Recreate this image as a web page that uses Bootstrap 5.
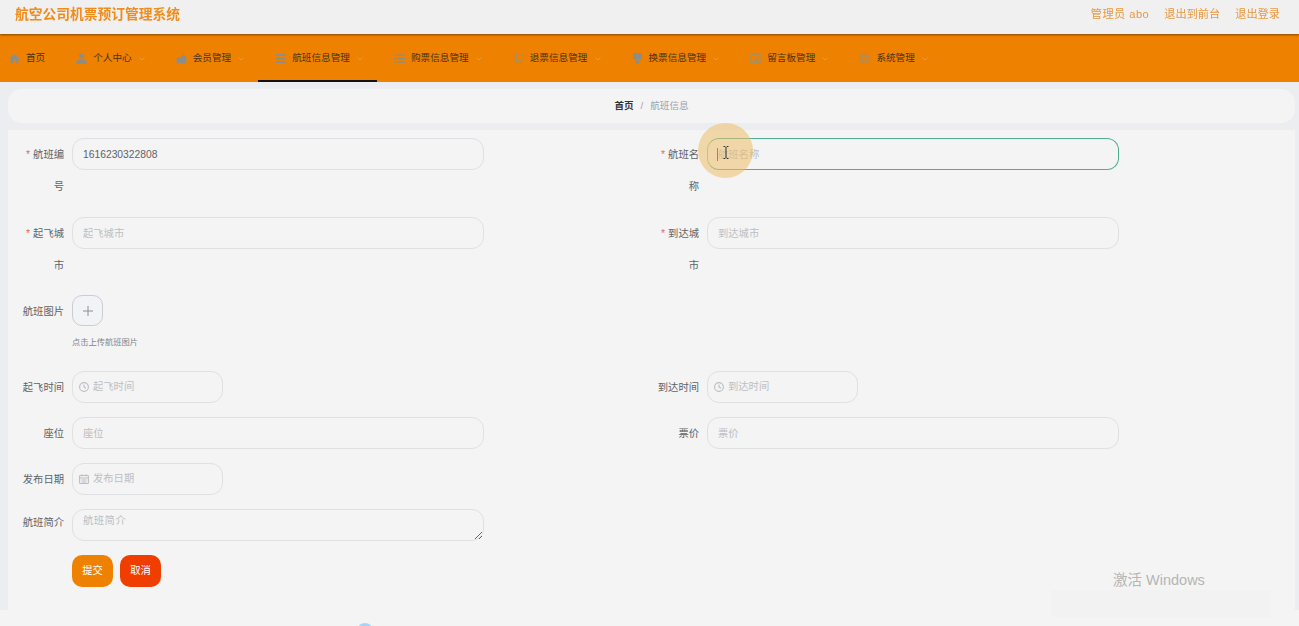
<!DOCTYPE html>
<html lang="zh-CN">
<head>
<meta charset="utf-8">
<title>航空公司机票预订管理系统</title>
<link href="https://cdn.jsdelivr.net/npm/bootstrap@5.3.0/dist/css/bootstrap.min.css" rel="stylesheet">
<style>
html,body{height:626px;overflow:hidden;}
body{background:#f4f4f4;font-family:"Liberation Sans","Noto Sans CJK SC",sans-serif;font-size:10.3px;color:#5f6267;}
.stage{position:relative;height:626px;overflow:hidden;filter:blur(.35px);}
.topbar{height:34px;background:#f0f0f0;padding:0 19px 0 15px;position:relative;z-index:2;box-shadow:0 1px 2px rgba(70,40,0,.65);}
.brand-title{font-size:13.75px;font-weight:700;color:#ef8c1c;line-height:30px;}
.top-link{font-size:11.2px;color:#e9983f;text-decoration:none;line-height:28px;margin-left:15px;}
.top-link.admin{letter-spacing:.45px;}
.menubar{height:48px;background:#ef8100;}
.menu-item{height:48px;padding:3px 14px 0 17px;font-size:9.65px;color:#4a3312;text-decoration:none;border-bottom:2px solid transparent;}
.menu-item:hover{color:#4a3312;}
.menu-item.first{padding:2px 14px 0 9px;}
.menu-item.on{border-bottom-color:#111;}
.mi{width:11px;height:11px;margin-right:6px;flex:none;fill:#8d8d88;}
.ms{fill:none;stroke:#a98d5e;stroke-width:1.5;}
.chev{width:6px;height:4px;margin-left:7px;flex:none;fill:none;stroke:#dd9f49;stroke-width:1;}
.content-area{height:528px;background:#ecedf0;padding:7px 4px 0 8px;}
.crumbs{height:34px;border-radius:14px;background:#f4f4f4;font-size:9.6px;margin-bottom:7px;padding-left:0;}
.crumbs b{color:#333;font-weight:700;}
.crumbs i{font-style:normal;color:#9aa0a8;margin:0 7px;}
.crumbs span{color:#9aa3ad;}
.form-panel{height:480px;background:#f4f4f4;padding:8px 17px 0 0;}
.frow{margin-bottom:14px;}
.frow.m15{margin-bottom:15px;}
.fitem{display:flex;align-items:flex-start;}
.flabel{width:56px;margin:0 8px -1px 0;padding:1px 0 0 9px;text-align:right;line-height:32px;font-size:10.3px;color:#5f6267;word-break:break-all;}
.flabel.plain{padding-left:0;white-space:nowrap;}
.flabel.short{line-height:26px;}
.req{color:#e26a60;margin-right:3px;}
.form-control.fld{width:412px;height:32px;padding:0 10px;border:1px solid #dfe0e3;border-radius:12px;background:#f4f4f4;font-size:10.3px;color:#5f6267;box-shadow:none;}
.form-control.fld::placeholder{color:#bcbec3;}
.form-control.fld.focused{border-color:#4fae92;border-left-color:#8fcf8a;}
.form-control.area{resize:vertical;padding:3px 10px;line-height:16px;letter-spacing:.5px;min-height:32px;}
.pickbox{width:151px;height:32px;border:1px solid #dfe0e3;border-radius:12px;padding-left:6px;}
.pickbox svg{width:10px;height:10px;margin-right:4px;flex:none;fill:none;stroke:#bcbec3;stroke-width:1.1;}
.pickbox input{border:0;outline:0;background:transparent;width:120px;font-size:10.3px;padding:0;}
.pickbox input::placeholder{color:#bcbec3;}
.uploader{width:31px;height:31px;border:1px solid #c8cdd6;border-radius:10px;background:#f1f3f6;}
.uploader svg{width:10px;height:10px;stroke:#8a8f96;stroke-width:1;fill:none;}
.hint{font-size:8.25px;color:#80848a;line-height:31px;padding-top:1px;height:31px;}
.btn.act{width:41px;height:32px;padding:0;border:0;border-radius:10px;font-size:10.3px;color:#fff;}
.btn-sub{background:#ef8100;}
.btn-can{background:#f03d00;margin-left:7px;}
.actions{margin-left:64px;}
.ripple{position:absolute;left:698px;top:123px;width:55px;height:55px;border-radius:50%;background:rgba(238,190,105,.55);z-index:3;}
.beam{position:absolute;left:722px;top:146px;width:8px;height:13px;z-index:4;fill:none;stroke:#333;stroke-width:1;}
.caret-line{position:absolute;left:717px;top:148px;width:1px;height:13px;background:#8d8a80;z-index:4;}
.blue-dot{position:absolute;left:357px;top:623px;width:16px;height:16px;border-radius:50%;background:#a9d4f5;}
.wm{position:absolute;left:1113px;top:571px;font-size:14.5px;line-height:18px;color:#b5b5b5;z-index:3;}
.wm-smudge{position:absolute;left:1051px;top:590px;width:220px;height:27px;background:#f2f2f2;}
</style>
</head>
<body>
<div class="stage">
  <header class="topbar d-flex justify-content-between align-items-start">
    <div class="brand-title">航空公司机票预订管理系统</div>
    <div class="d-flex">
      <a class="top-link admin" href="#">管理员 abo</a>
      <a class="top-link" href="#">退出到前台</a>
      <a class="top-link" href="#">退出登录</a>
    </div>
  </header>
  <nav class="menubar d-flex">
    <a class="menu-item first d-flex align-items-center" href="#"><svg class="mi" viewBox="0 0 16 16"><path d="M8 1.500 0 9h2.500v6h4v-4.500h3V15h4V9H16z"/></svg>首页</a>
    <a class="menu-item d-flex align-items-center" href="#"><svg class="mi" viewBox="0 0 16 16"><circle cx="8" cy="4.500" r="3.800"/><path d="M0 15.500c0-4.500 3-6 8-6s8 1.500 8 6z"/></svg>个人中心<svg class="chev" viewBox="0 0 6 4"><path d="M.5.5 3 3 5.500.5"/></svg></a>
    <a class="menu-item d-flex align-items-center" href="#"><svg class="mi" viewBox="0 0 16 16"><path d="M1 7l5-1 5-4 4 3v10H1z"/></svg>会员管理<svg class="chev" viewBox="0 0 6 4"><path d="M.5.5 3 3 5.500.5"/></svg></a>
    <a class="menu-item on d-flex align-items-center" href="#"><svg class="mi" viewBox="0 0 16 16"><path d="M1 1.500h14v2.500H1zM1 6.800h14v2.500H1zM1 12h14v2.500H1z"/></svg>航班信息管理<svg class="chev" viewBox="0 0 6 4"><path d="M.5.5 3 3 5.500.5"/></svg></a>
    <a class="menu-item d-flex align-items-center" href="#"><svg class="mi" viewBox="0 0 16 16"><path d="M0 2h3v2H0zM4.500 2H16v2H4.500zM0 7h3v2H0zM4.500 7H16v2H4.500zM0 12h3v2H0zM4.500 12H16v2H4.500z"/></svg>购票信息管理<svg class="chev" viewBox="0 0 6 4"><path d="M.5.5 3 3 5.500.5"/></svg></a>
    <a class="menu-item d-flex align-items-center" href="#"><svg class="mi ms" viewBox="0 0 16 16"><rect x="5" y="1" width="10" height="10.500" rx="1"/><path d="M5 4H2a1 1 0 0 0-1 1v9.500a.5.500 0 0 0 .5.500H11a1 1 0 0 0 1-1v-2.500"/></svg>退票信息管理<svg class="chev" viewBox="0 0 6 4"><path d="M.5.5 3 3 5.500.5"/></svg></a>
    <a class="menu-item d-flex align-items-center" href="#"><svg class="mi" viewBox="0 0 16 16"><path d="M1.500 0h13v9.500h-13zM5 10.500h6V13l-2 3H7l-2-3z"/></svg>换票信息管理<svg class="chev" viewBox="0 0 6 4"><path d="M.5.5 3 3 5.500.5"/></svg></a>
    <a class="menu-item d-flex align-items-center" href="#"><svg class="mi ms" viewBox="0 0 16 16"><rect x="1" y="2" width="14" height="12" rx="1"/><path d="M6 11l5-5M8 11h3V8"/></svg>留言板管理<svg class="chev" viewBox="0 0 6 4"><path d="M.5.5 3 3 5.500.5"/></svg></a>
    <a class="menu-item d-flex align-items-center" href="#"><svg class="mi ms" viewBox="0 0 16 16"><circle cx="8" cy="8" r="7"/><circle cx="8" cy="8" r="4"/></svg>系统管理<svg class="chev" viewBox="0 0 6 4"><path d="M.5.5 3 3 5.500.5"/></svg></a>
  </nav>
  <main class="content-area">
    <div class="crumbs d-flex align-items-center justify-content-center"><b>首页</b><i>/</i><span>航班信息</span></div>
    <form class="form-panel">
      <div class="row g-0 frow m15">
        <div class="col-6 fitem"><label class="flabel"><span class="req">*</span>航班编号</label><input class="form-control fld" type="text" value="1616230322808"></div>
        <div class="col-6 fitem"><label class="flabel"><span class="req">*</span>航班名称</label><input class="form-control fld focused" type="text" placeholder="航班名称"></div>
      </div>
      <div class="row g-0 frow">
        <div class="col-6 fitem"><label class="flabel"><span class="req">*</span>起飞城市</label><input class="form-control fld" type="text" placeholder="起飞城市"></div>
        <div class="col-6 fitem"><label class="flabel"><span class="req">*</span>到达城市</label><input class="form-control fld" type="text" placeholder="到达城市"></div>
      </div>
      <div class="row g-0 frow">
        <div class="col-6 fitem"><label class="flabel plain">航班图片</label>
          <div>
            <div class="uploader d-flex align-items-center justify-content-center"><svg viewBox="0 0 10 10"><path d="M5 0v10M0 5h10"/></svg></div>
            <div class="hint">点击上传航班图片</div>
          </div>
        </div>
      </div>
      <div class="row g-0 frow">
        <div class="col-6 fitem"><label class="flabel plain">起飞时间</label><div class="pickbox d-flex align-items-center"><svg viewBox="0 0 10 10"><circle cx="5" cy="5" r="4.400"/><path d="M5 2.500V5l2 1.200"/></svg><input type="text" placeholder="起飞时间"></div></div>
        <div class="col-6 fitem"><label class="flabel plain">到达时间</label><div class="pickbox d-flex align-items-center"><svg viewBox="0 0 10 10"><circle cx="5" cy="5" r="4.400"/><path d="M5 2.500V5l2 1.200"/></svg><input type="text" placeholder="到达时间"></div></div>
      </div>
      <div class="row g-0 frow">
        <div class="col-6 fitem"><label class="flabel plain">座位</label><input class="form-control fld" type="text" placeholder="座位"></div>
        <div class="col-6 fitem"><label class="flabel plain">票价</label><input class="form-control fld" type="text" placeholder="票价"></div>
      </div>
      <div class="row g-0 frow">
        <div class="col-6 fitem"><label class="flabel plain">发布日期</label><div class="pickbox d-flex align-items-center"><svg viewBox="0 0 10 10"><rect x=".6" y="1.500" width="8.800" height="8" rx=".8"/><path d="M.6 4h8.800M3 .3v2M7 .3v2M2.500 6h5M2.500 8h5"/></svg><input type="text" placeholder="发布日期"></div></div>
      </div>
      <div class="row g-0 frow">
        <div class="col-6 fitem"><label class="flabel plain short">航班简介</label><textarea class="form-control fld area" rows="1" placeholder="航班简介"></textarea></div>
      </div>
      <div class="actions d-flex">
        <button type="button" class="btn act btn-sub">提交</button>
        <button type="button" class="btn act btn-can">取消</button>
      </div>
    </form>
  </main>
  <div class="ripple"></div>
  <div class="caret-line"></div>
  <svg class="beam" viewBox="0 0 8 13"><path d="M1.500.5h1.500L4 1.500 5 .5h1.500M4 1.500v10M1.500 12.500H3l1-1 1 1h1.500"/></svg>
  <div class="blue-dot"></div>
  <div class="wm-smudge"></div>
  <div class="wm">激活 Windows</div>
</div>
<script src="https://cdn.jsdelivr.net/npm/bootstrap@5.3.0/dist/js/bootstrap.bundle.min.js"></script>
</body>
</html>
